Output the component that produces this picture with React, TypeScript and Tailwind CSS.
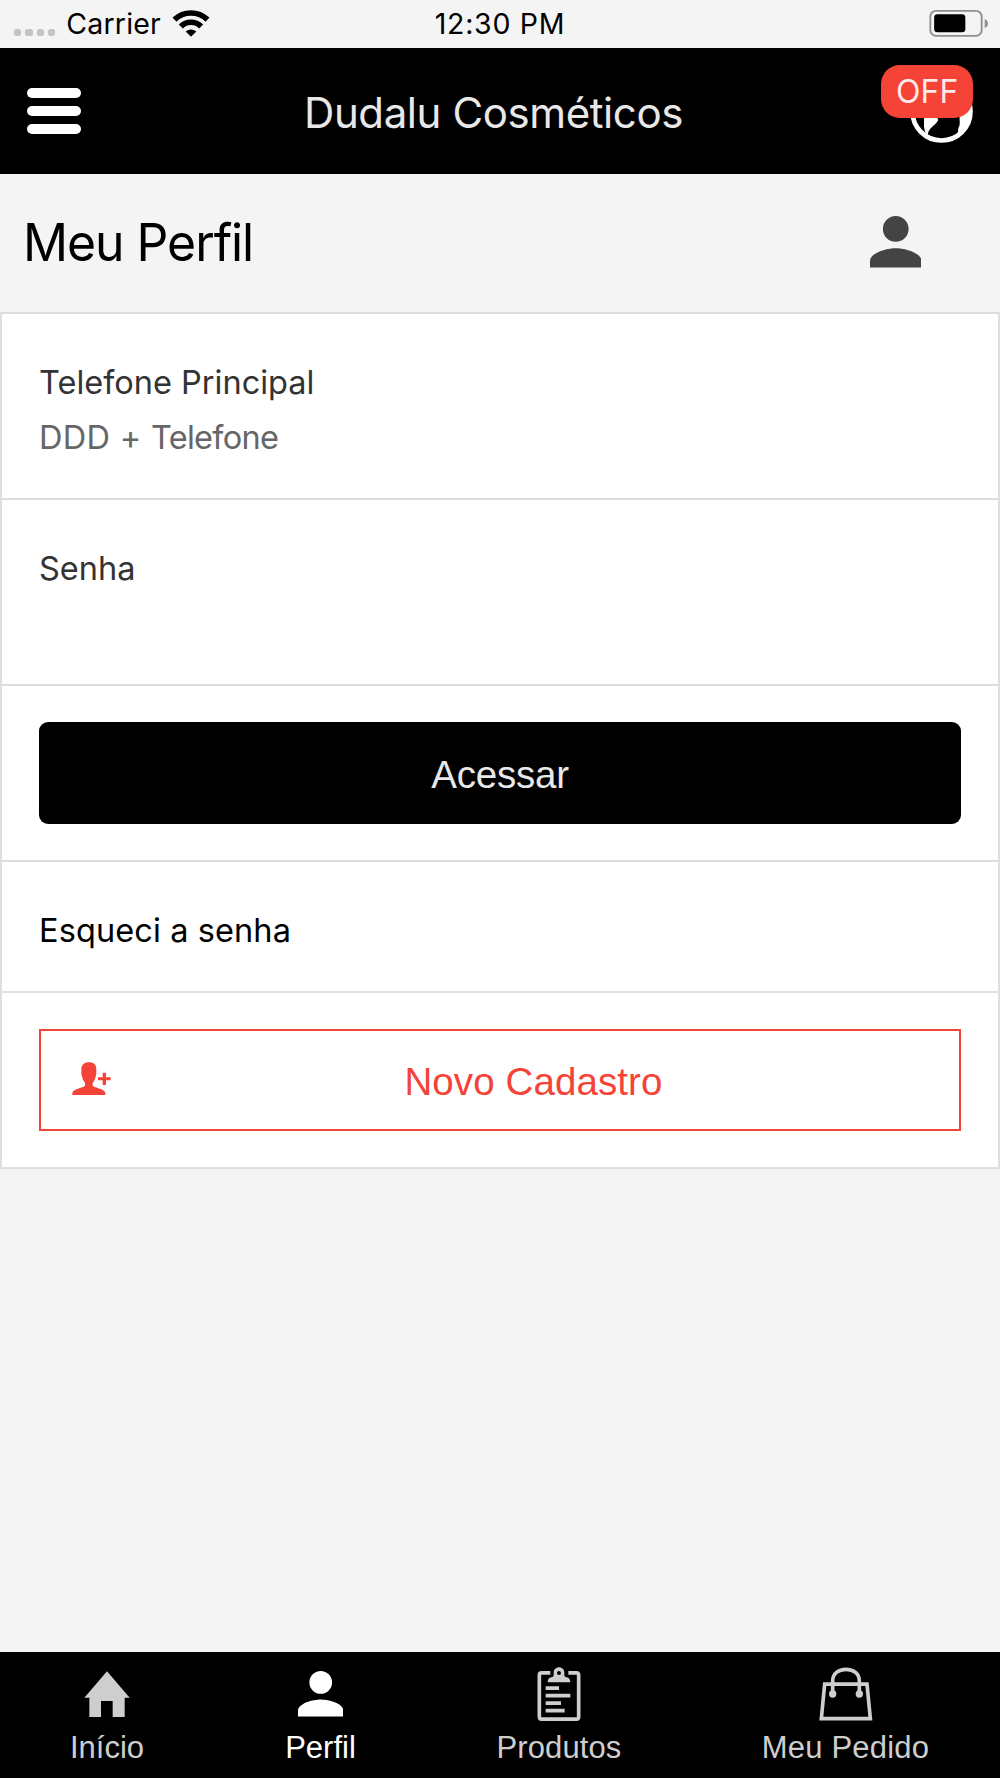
import type { ReactNode } from 'react';

function SignalDots() {
  return (
    <div className="flex gap-[4px]">
      {[0, 1, 2, 3].map((i) => (
        <span key={i} className="h-[7px] w-[7.3px] rounded-[2.5px] bg-[#c4c4c4]" />
      ))}
    </div>
  );
}

function WifiIcon() {
  return (
    <svg width="38" height="28" viewBox="0 0 114 84" fill="none" stroke="#000" strokeWidth="17">
      <path d="M7.5 32A71.5 71.5 0 0 1 106.5 32" />
      <path d="M26.5 52.5A43 43 0 0 1 87.500 52.5" />
      <path d="M57 83L41 67.500A24 24 0 0 1 73 67.500Z" fill="#000" stroke="none" />
    </svg>
  );
}

function BatteryIcon() {
  return (
    <svg width="60" height="28" viewBox="0 0 180 84">
      <rect x="4" y="5.500" width="154" height="75" rx="17" fill="none" stroke="#8f8f8f" strokeWidth="5.500" />
      <rect x="15.500" y="16" width="93.500" height="54" rx="10" fill="#000" />
      <path d="M167 30c6 3 10 7 10 13.500s-4 10.500-10 13.500z" fill="#8f8f8f" />
    </svg>
  );
}

function PersonIcon({ className }: { className: string }) {
  return (
    <svg className={className} viewBox="4 4 16 16" fill="currentColor">
      <path d="M12 12c2.210 0 4-1.790 4-4s-1.790-4-4-4-4 1.790-4 4 1.790 4 4 4zm0 2c-2.670 0-8 1.340-8 4v2h16v-2c0-2.660-5.330-4-8-4z" />
    </svg>
  );
}

function GlobeIcon() {
  return (
    <svg width="63" height="63" viewBox="0 0 189 189">
      <circle cx="94.500" cy="94.500" r="87" fill="none" stroke="#fff" strokeWidth="14" />
      <path
        d="M60 14c-30 22-44 50-42 78l24 18 0 30c2 14 6 22 10 31l3-15c6-16 24-22 30-37l-12-19-22-10 6-30 24-16z"
        fill="#fff"
      />
      <path d="M176 62c14 38 6 78-36 110 6-14 2-24 8-34 4-16-4-28 6-50z" fill="#fff" />
    </svg>
  );
}

function UserPlusIcon() {
  return (
    <svg width="39" height="34" viewBox="0 0 117 102" fill="#f54337">
      <path d="M51 1C37 1 28 9 28 21c0 4 .5 7 0 11-.5 5 1 8 2 11 1 8 5 15 9 20v7c0 3-3 4-8 6C16 81 1 85 1 94v5h99v-5c0-9-15-13-30-18-5-2-8-3-8-6v-7c4-5 8-12 9-20 1-3 2.500-6 2-11-.5-4 0-7 0-11C73 9 65 1 51 1z" />
      <path d="M92 32h10v14h14v9h-14v14H92V55H78v-9h14z" />
    </svg>
  );
}

function HomeIcon() {
  return (
    <svg width="46" height="54" viewBox="0 0 138 162" fill="currentColor">
      <path d="M69 13L137 92h-15v58H86v-48H51v48H16V92H1z" />
    </svg>
  );
}

function ClipboardIcon() {
  return (
    <svg width="44" height="54" viewBox="0 0 132 162">
      <path
        d="M40 17.500H14q-7 0-7 7v125q0 7 7 7h104q7 0 7-7v-125q0-7-7-7H94"
        fill="none"
        stroke="currentColor"
        strokeWidth="11"
      />
      <path
        fillRule="evenodd"
        d="M66 1c-9 0-16 7-16 16v8c0 4-3 5-7 6-7 1-11 6-11 15h68c0-9-4-14-11-15-4-1-7-2-7-6v-8c0-9-7-16-16-16zm0 11a6 6 0 1 0 0 12 6 6 0 0 0 0-12z"
        fill="currentColor"
      />
      <path d="M26 63.500h40M26 86h74M26 108.500h46M26 131h57" stroke="currentColor" strokeWidth="11.500" />
    </svg>
  );
}

function BagIcon() {
  return (
    <svg width="54" height="54" viewBox="0 0 162 162" fill="none" stroke="currentColor">
      <path d="M17 51.500H144L154 155H7z" strokeWidth="11" />
      <path d="M41 78V42C41 20 58 7 81 7s40 13 40 35v36" strokeWidth="11" />
      <circle cx="41" cy="81" r="11" fill="currentColor" stroke="none" />
      <circle cx="121" cy="81" r="11" fill="currentColor" stroke="none" />
    </svg>
  );
}

function Tab({ icon, label, active, text }: { icon: ReactNode; label: string; active?: boolean; text?: string }) {
  return (
    <a className={`flex flex-col items-center ${active ? 'text-white' : 'text-[#cecece]'}`}>
      <span className="flex h-[54px] items-start">{icon}</span>
      <span className={`mt-[9px] whitespace-nowrap text-[31px] leading-[36px] ${text ?? ''}`}>{label}</span>
    </a>
  );
}

export default function App() {
  return (
    <div className="flex h-[1778px] w-[1000px] flex-col overflow-hidden bg-[#f4f4f4] font-['Inter',sans-serif] text-black">
      <div className="grid h-12 shrink-0 grid-cols-3 text-[28.5px] leading-[48px]">
        <div className="flex pl-[14px]">
          <div className="pt-[29px]">
            <SignalDots />
          </div>
          <span className="ml-[11px] tracking-[0.2px]">Carrier</span>
          <span className="ml-[11px] pt-[9px]">
            <WifiIcon />
          </span>
        </div>
        <span className="text-center tracking-[0.7px]">12:30 PM</span>
        <div className="flex justify-end pr-[11px] pt-[9px]">
          <BatteryIcon />
        </div>
      </div>

      <header className="flex h-[126px] shrink-0 items-center justify-between bg-black pl-[26.500px] pr-[26.500px]">
        <button className="flex w-[93px] flex-col gap-[8.500px]">
          <span className="h-[9.700px] w-[54.500px] rounded-full bg-white" />
          <span className="h-[9.700px] w-[54.500px] rounded-full bg-white" />
          <span className="h-[9.700px] w-[54.500px] rounded-full bg-white" />
        </button>
        <h1 className="-ml-[13px] pt-[3px] text-[42px] leading-none tracking-[-0.4px] text-[#e8e8e8]">
          Dudalu Cosméticos
        </h1>
        <div className="relative flex w-[93px] justify-end">
          <GlobeIcon />
          <span className="absolute right-0 -top-[15px] flex h-[53px] w-[92.500px] items-center justify-center rounded-[19px] bg-[#f54337] pt-px text-[32px] leading-none text-[#fde9e8]">
            OFF
          </span>
        </div>
      </header>

      <div className="flex h-[138px] shrink-0 items-center justify-between pl-[23px] pr-[79px]">
        <h2 className="origin-left scale-x-[0.96] text-[52px] leading-none tracking-[-1.100px]">Meu Perfil</h2>
        <PersonIcon className="mb-[2px] h-[51.500px] w-[51.500px] text-[#444]" />
      </div>

      <main className="flex shrink-0 flex-col divide-y-2 divide-[#dedede] border-2 border-[#dedede] bg-white text-[32.500px]">
        <label className="flex h-[186px] flex-col px-[37px] pt-[41px] leading-[55px]">
          <span className="text-[#333]">Telefone Principal</span>
          <span className="tracking-[-0.700px] text-[#666]">
            <span className="tracking-[0.300px]">DDD + </span>Telefone
          </span>
        </label>
        <label className="h-[186px] px-[37px] pt-[41px] leading-[55px] text-[#333]">Senha</label>
        <div className="h-[176px] px-[37px] pt-9">
          <button className="h-[102px] w-full rounded-[9px] bg-black pt-1 font-['Liberation_Sans',sans-serif] text-[38.500px] tracking-[-0.200px] text-[#e8e8e8]">
            Acessar
          </button>
        </div>
        <a className="flex h-[131px] items-center px-[37px] pt-[9px] tracking-[0.100px]">Esqueci a senha</a>
        <div className="h-[174px] px-[37px] pt-9">
          <button className="flex h-[102px] w-full items-center border-2 border-[#f54337] pl-[31px] font-['Liberation_Sans',sans-serif] text-[38.500px] tracking-[0.100px] text-[#f54337]">
            <span className="pb-[2px]">
              <UserPlusIcon />
            </span>
            <span className="flex-1 pr-[3px] pt-[3px] text-center">Novo Cadastro</span>
          </button>
        </div>
      </main>

      <nav className="mt-auto grid h-[126px] shrink-0 grid-cols-[214px_213px_264px_309px] bg-black pt-[15px] font-['Liberation_Sans',sans-serif]">
        <Tab icon={<HomeIcon />} label="Início" />
        <Tab icon={<PersonIcon className="mt-[4px] h-[45.500px] w-[45.500px]" />} label="Perfil" active />
        <Tab icon={<ClipboardIcon />} label="Produtos" text="tracking-[0.1px]" />
        <Tab icon={<BagIcon />} label="Meu Pedido" text="tracking-[0.2px]" />
      </nav>
    </div>
  );
}
